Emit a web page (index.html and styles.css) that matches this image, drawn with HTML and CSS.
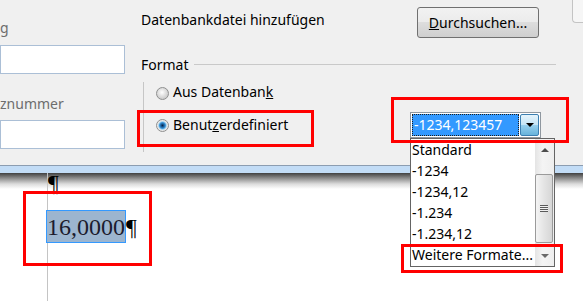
FILE: index.html
```html
<!DOCTYPE html>
<html lang="de">
  <head>
    <meta charset="UTF-8" />
    <title>Feldbefehl Format</title>
    <meta name="viewport" content="width=device-width, initial-scale=1.0" />
    <link rel="stylesheet" href="styles.css">
  </head>
  <body>
    <div class="screen">
      <div class="dialog">
        <div class="left-col">
          <div class="field-label">g</div>
          <div class="text-input"></div>
          <div class="field-label second">znummer</div>
          <div class="text-input"></div>
        </div>

        <div class="right-col">
          <div class="top-row">
            <span class="caption">Datenbankdatei hinzufügen</span>
            <button class="browse" type="button"><u>D</u>urchsuchen...</button>
            <div class="corner"></div>
          </div>

          <div class="legend">
            <span>Format</span>
            <div class="rule"></div>
          </div>

          <div class="group">
            <div class="option">
              <span class="radio"></span>
              <span>Aus Datenban<u>k</u></span>
            </div>
            <div class="option-row">
              <div class="option">
                <span class="radio checked"></span>
                <span>Benut<u>z</u>erdefiniert</span>
              </div>
              <div class="combo">
                <div class="combo-value">-1234,123457</div>
                <div class="combo-btn"><span class="arrow-down"></span></div>

                <div class="dropdown">
                  <ul class="items">
                    <li>Standard</li>
                    <li>-1234</li>
                    <li>-1234,12</li>
                    <li>-1.234</li>
                    <li>-1.234,12</li>
                    <li>Weitere Formate...</li>
                  </ul>
                  <div class="scrollbar">
                    <div class="sb-btn"><span class="sb-up"></span></div>
                    <div class="sb-track">
                      <div class="sb-thumb"><span class="grip"></span></div>
                    </div>
                    <div class="sb-btn"><span class="sb-down"></span></div>
                  </div>
                </div>
              </div>
            </div>
          </div>
        </div>
      </div>

      <div class="band"></div>

      <div class="doc">
        <div class="page">
          <div class="para-empty">¶</div>
          <div class="para-num">
            <span class="sel">16,0000</span>
            <span class="pilcrow">¶</span>
          </div>
        </div>
      </div>

      <!-- rote Markierungen -->
      <div class="mark mark-radio"></div>
      <div class="mark mark-combo"></div>
      <div class="mark mark-more"></div>
      <div class="mark mark-value"></div>
    </div>
  </body>
</html>
```

FILE: styles.css
```css
* {
  box-sizing: border-box;
}

body {
  margin: 0;
  width: 583px;
  height: 301px;
  overflow: hidden;
  background: #fff;
  font-family: "Noto Sans", "Open Sans", sans-serif;
  font-size: 14px;
  line-height: 20px;
  color: #000;
}

.screen {
  position: relative;
  height: 301px;
}

.dialog {
  display: grid;
  grid-template-columns: 125px 442px;
  column-gap: 16px;
  height: 166px;
  background: #f0f0f0;
  border-bottom: 1px solid #8c9db1;
}

/* linke Spalte */
.left-col {
  padding-top: 18px;
}

.field-label {
  height: 20px;
  margin-bottom: 7px;
  color: #6d6d6d;
  white-space: nowrap;
}

.field-label.second {
  margin-top: 20px;
  margin-bottom: 6px;
}

.text-input {
  height: 29px;
  background: #fff;
  border: 1px solid #abbfd6;
}

/* rechte Spalte */
.top-row {
  display: grid;
  grid-template-columns: 276px 122px 1fr;
  padding-top: 7px;
}

.caption {
  margin-top: 3px;
  white-space: nowrap;
}

.browse {
  height: 31px;
  padding: 0;
  border: 1px solid #707070;
  border-radius: 3px;
  background: linear-gradient(#f2f2f2 0%, #ebebeb 50%, #dddddd 50%, #cfcfcf 100%);
  font-family: inherit;
  font-size: 14px;
  color: #000;
}

.corner {
  margin: -7px 0 0 33px;
  height: 23px;
  background: #f6f6f6;
  border-left: 1px solid #c4c4c4;
  border-bottom: 1px solid #c4c4c4;
  border-bottom-left-radius: 4px;
}

.legend {
  display: flex;
  align-items: center;
  margin-top: 17px;
}

.rule {
  flex: 1;
  height: 1px;
  margin: -2px 27px 0 5px;
  background: #c9c9c9;
}

.group {
  margin: 7px 0 0 2px;
  padding: 0 0 14px 12px;
  border-left: 1px solid #c6c6c6;
}

.option {
  display: flex;
  align-items: center;
  gap: 4px;
  height: 20px;
  white-space: nowrap;
}

.option-row {
  display: grid;
  grid-template-columns: 254px 131px;
  align-items: center;
  height: 26px;
  margin-top: 10px;
}

.radio {
  width: 13px;
  height: 13px;
  margin-top: 3px;
  border-radius: 50%;
  border: 1px solid #8e8f8f;
  background: radial-gradient(circle at 45% 40%, #ffffff 0, #e6e6e6 3px, #cfcfcf 6px);
}

.option-row .radio {
  margin-top: 1px;
}

.radio.checked {
  background: radial-gradient(circle at 50% 50%, #0a2340 0, #185a98 1.5px, #3f98d8 3px, #a9d6f2 4px, #e4e4e4 4.6px, #f2f2f2 6px);
}

/* Kombinationsfeld */
.combo {
  position: relative;
  display: flex;
  gap: 1px;
  height: 26px;
  padding: 1px;
  background: #fff;
  border: 1px solid #8f979f;
}

.combo-value {
  width: 107px;
  padding-left: 1px;
  background: #3399ff;
  color: #fff;
  border: 1px dotted #1e1e1e;
  line-height: 20px;
}

.combo-btn {
  flex: 1;
  display: flex;
  align-items: center;
  justify-content: center;
  border: 1px solid #3c7fb1;
  border-radius: 2px;
  background: linear-gradient(#e5f4fc, #c4e5f6 50%, #98d1ef 50%, #68b3db);
}

.arrow-down {
  width: 0;
  height: 0;
  border-left: 4px solid transparent;
  border-right: 4px solid transparent;
  border-top: 4px solid #000;
}

.dropdown {
  position: absolute;
  top: 25px;
  left: -1px;
  z-index: 1;
  display: grid;
  grid-template-columns: 1fr 19px;
  width: 145px;
  height: 129px;
  background: #fff;
  border: 1px solid #646464;
}

.items {
  margin: 0;
  padding: 0;
  list-style: none;
}

.items li {
  height: 21px;
  padding-left: 1px;
  line-height: 21px;
  white-space: nowrap;
  overflow: hidden;
}

.scrollbar {
  display: flex;
  flex-direction: column;
  background: linear-gradient(to right, #e4e4e4, #f4f4f4 40%, #eeeeee);
}

.sb-btn {
  display: flex;
  align-items: center;
  justify-content: center;
  height: 21px;
}

.sb-up,
.sb-down {
  width: 0;
  height: 0;
  border-left: 4px solid transparent;
  border-right: 4px solid transparent;
}

.sb-up {
  border-bottom: 4px solid #4d4d4d;
}

.sb-down {
  border-top: 4px solid #6a6a6a;
}

.sb-track {
  flex: 1;
  padding: 14px 1px 2px 0;
}

.sb-thumb {
  display: flex;
  align-items: center;
  justify-content: center;
  height: 100%;
  border: 1px solid #9a9a9a;
  border-radius: 2px;
  background: linear-gradient(to right, #f4f4f4, #e4e4e4 50%, #d6d6d6);
}

.grip {
  width: 8px;
  height: 7px;
  background: repeating-linear-gradient(#5a5a5a 0 1px, #f0f0f0 1px 2px);
}

/* Dokumentbereich */
.band {
  height: 7px;
  background: #c2dcf6;
}

.doc {
  height: 128px;
  background: linear-gradient(#404040 0, #8a8a8a 5px, #dcdcdc 11px, #ffffff 16px);
}

.page {
  height: 100%;
  margin-left: 47px;
  border-left: 1px solid #c4c4c4;
  font-family: "Liberation Serif", "Times New Roman", serif;
  font-size: 24px;
  color: #000;
}

.para-empty {
  line-height: 20px;
}

.para-num {
  display: flex;
  align-items: flex-start;
  margin: 17px 0 0 -2px;
}

.sel {
  padding: 3px 0 1px;
  line-height: 27px;
  background: #9cb5cf;
  border: 1px solid #3399ff;
  color: #1c1c2e;
}

.pilcrow {
  padding-top: 4px;
  line-height: 27px;
}

/* rote Markierungen */
.mark {
  position: absolute;
  z-index: 2;
  border: 3px solid #ff0000;
}

.mark-radio {
  left: 137px;
  top: 110px;
  width: 177px;
  height: 37px;
}

.mark-combo {
  left: 391px;
  top: 97px;
  width: 178px;
  height: 46px;
}

.mark-more {
  left: 401px;
  top: 244px;
  width: 162px;
  height: 29px;
}

.mark-value {
  left: 23px;
  top: 191px;
  width: 129px;
  height: 75px;
}
```
